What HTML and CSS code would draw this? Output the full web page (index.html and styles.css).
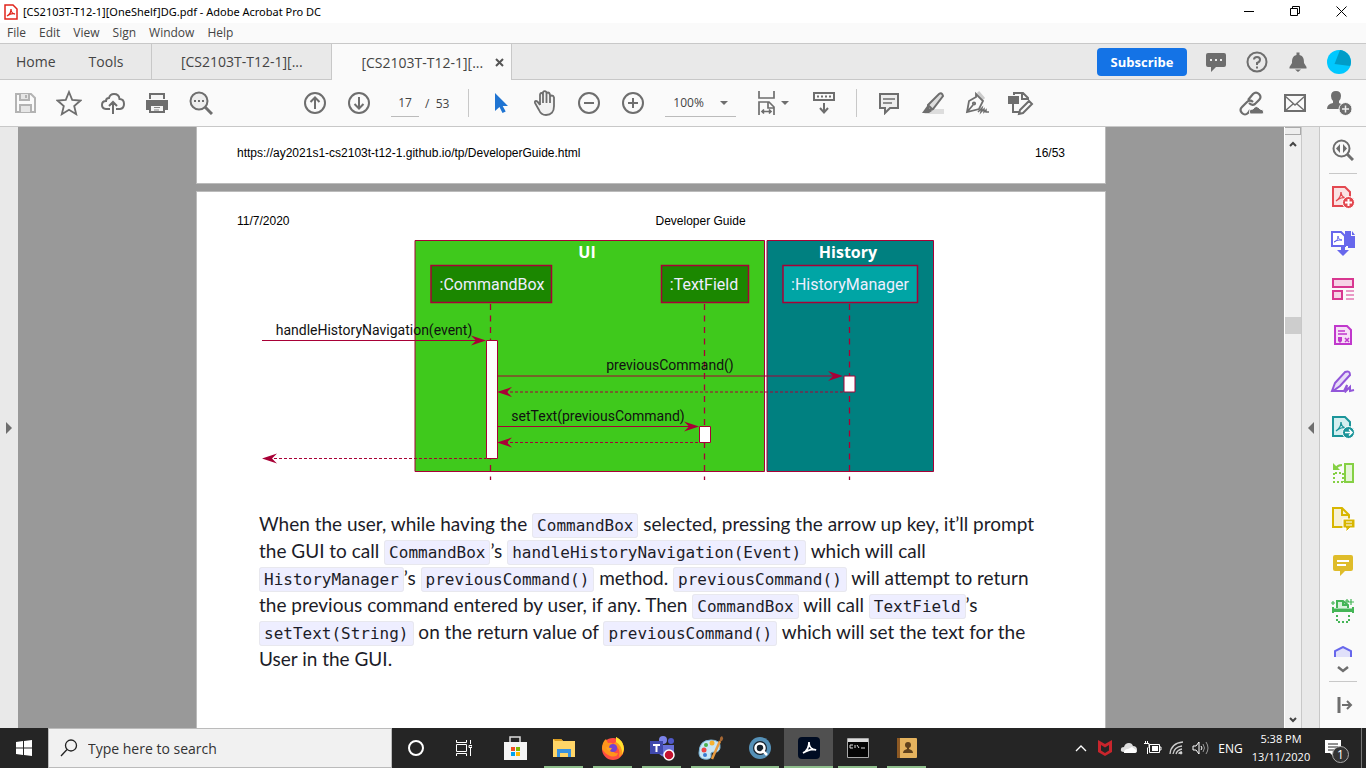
FILE: index.html
```html
<!DOCTYPE html>
<html lang="en">
<head>
<meta charset="utf-8">
<title>[CS2103T-T12-1][OneShelf]DG.pdf - Adobe Acrobat Pro DC</title>
<link rel="stylesheet" href="styles.css">
</head>
<body>
<header class="titlebar">
  <svg class="app-icon" width="14" height="16" viewBox="0 0 14 16"><path d="M2 1h7l4 4v10H1V1z" fill="#fff" stroke="#e1251b" stroke-width="1.5"/><path d="M3 12c2-1 4-4 4-7 0 3 2 5 4 5-3-1-5 0-8 2z" fill="none" stroke="#e1251b" stroke-width="1.3"/></svg>
  <span class="window-title">[CS2103T-T12-1][OneShelf]DG.pdf - Adobe Acrobat Pro DC</span>
  <div class="window-controls">
    <button aria-label="Minimize"><svg width="11" height="11"><path d="M0 5.5h10" stroke="#000"/></svg></button>
    <button aria-label="Restore"><svg width="11" height="11" fill="none" stroke="#000"><path d="M.5 2.500h7v7h-7zM2.500 2.500v-2h7v7h-2"/></svg></button>
    <button aria-label="Close"><svg width="11" height="11"><path d="M.5.500l10 10M10.500.500l-10 10" stroke="#000"/></svg></button>
  </div>
</header>
<nav class="menubar" aria-label="Menu">
  <button>File</button><button>Edit</button><button>View</button><button>Sign</button><button>Window</button><button>Help</button>
</nav>
<div class="tabbar">
  <button class="nav-tab">Home</button><button class="nav-tab tools">Tools</button>
  <button class="doc-tab">[CS2103T-T12-1][...</button>
  <div class="doc-tab active"><button>[CS2103T-T12-1][...</button><button class="close-tab" aria-label="Close tab"><svg width="9" height="9"><path d="M1 1l7 7M8 1L1 8" stroke="#555" stroke-width="2"/></svg></button></div>
  <div class="account">
    <button class="subscribe">Subscribe</button>
    <button class="round" aria-label="Notes"><svg width="22" height="22" viewBox="0 0 22 22"><path d="M3 2h16q2 0 2 2v10q0 2-2 2h-8l-5 5v-5H3q-2 0-2-2V4q0-2 2-2z" fill="#6e6e6e"/><path d="M5 8h2v2H5zm5 0h2v2h-2zm5 0h2v2h-2z" fill="#eee"/></svg></button>
    <button class="round" aria-label="Help"><svg width="22" height="22" viewBox="0 0 22 22" fill="none" stroke="#6e6e6e" stroke-width="2"><circle cx="11" cy="11" r="9.500"/><path d="M8 8.500Q8 6 11 6t3 2.500-3 3.500v2m0 1.500v2"/></svg></button>
    <button class="round" aria-label="Notifications"><svg width="18" height="22" viewBox="0 0 18 22" fill="#6e6e6e"><path d="M7.500 4V1.500h3V4c4 1 4.500 4 4.500 8l2.500 4v1.500H.5V16L3 12c0-4 .5-7 4.500-8zM6 18.500h6l-3 2.500z"/></svg></button>
    <button class="round" aria-label="Profile"><svg width="24" height="24" viewBox="0 0 24 24"><circle cx="12" cy="12" r="12" fill="#00c8ff"/><path d="M13 .1A12 12 0 0 1 23.200 16L7.500 14z" fill="#009cc8"/></svg></button>
  </div>
</div>
<div class="toolbar">
  <div class="group files">
    <button aria-label="Save"><svg width="24" height="24" viewBox="0 0 24 24" fill="none" stroke="#b3b3b3" stroke-width="2"><path d="M3 3h15l4 4v14H3z"/><path d="M7 3v6h9V3M7 21v-7h11v7" fill="#e6e6e6"/><path d="M13 4v3"/></svg></button>
    <button aria-label="Star"><svg width="26" height="26" viewBox="0 0 26 26"><path d="M13 2l3.200 7.800 8.300.7-6.300 5.500 2 8.200-7.200-4.400-7.200 4.400 2-8.200L1.500 10.500l8.300-.7z" fill="none" stroke="#6e6e6e" stroke-width="1.800"/></svg></button>
    <button aria-label="Upload"><svg width="24" height="24" viewBox="0 0 24 24" fill="none" stroke="#6e6e6e" stroke-width="2"><path d="M9 18H5q-4-.5-4-4 0-4 4-4 0-3 3-3 1-4 5-4 5 0 5.500 5 4.500 0 4.500 5 0 4.500-4 5h-4M12 23V11m-4 4l4-4 4 4"/></svg></button>
    <button aria-label="Print"><svg width="24" height="24" viewBox="0 0 24 24"><path d="M4 2h16v6H4zM1 9h22v10h-3v3H4v-3H1z" fill="#6e6e6e"/><path d="M6 4h12v4H6zM6 15h12v5H6z" fill="#f5f5f5"/><path d="M9 16.500h6m-6 2.500h5" stroke="#888"/></svg></button>
    <button aria-label="Find"><svg width="24" height="24" viewBox="0 0 24 24" fill="none" stroke="#6e6e6e" stroke-width="2"><circle cx="10" cy="10" r="8.500" fill="#eee"/><path d="M16 16l7 7" stroke-width="3"/><path d="M5 10h2m2 0h2m2 0h2"/></svg></button>
  </div>
  <div class="group paging">
    <button aria-label="Previous page"><svg width="22" height="22" viewBox="0 0 22 22" fill="none" stroke="#6e6e6e" stroke-width="2"><circle cx="11" cy="11" r="10"/><path d="M11 17V6M6.500 10L11 5.500l4.500 4.500"/></svg></button>
    <button aria-label="Next page"><svg width="22" height="22" viewBox="0 0 22 22" fill="none" stroke="#6e6e6e" stroke-width="2"><circle cx="11" cy="11" r="10"/><path d="M11 5v11m-4.500-4l4.500 4.500 4.500-4.500"/></svg></button>
  </div>
  <input class="page-number" aria-label="Page number" value="17"><span class="page-total">/&nbsp; 53</span>
  <span class="separator"></span>
  <div class="group">
    <button aria-label="Select"><svg width="24" height="24" viewBox="0 0 24 24"><path d="M6 2v18l4.500-4 3 6 3.200-1.500-3-5.500H19z" fill="#1f74d2"/></svg></button>
    <button aria-label="Hand"><svg width="24" height="26" viewBox="0 0 24 26" fill="#f2f2f2" stroke="#6e6e6e" stroke-width="1.800"><path d="M7 15V5q0-2 1.500-2T10 5v-2q0-1.800 1.700-1.800T13.500 3v1q0-1.500 1.500-1.500T17 5v2q0-1.500 1.800-1.500T21 7.500V16q0 9-8 9-5 0-7-5l-4-7q-.5-2 1-2t4 4M10 4v9m3.500-9v9M17 6v7"/></svg></button>
    <button aria-label="Zoom out"><svg width="22" height="22" viewBox="0 0 22 22" fill="none" stroke="#6e6e6e" stroke-width="2"><circle cx="11" cy="11" r="10"/><path d="M6 11h10"/></svg></button>
    <button aria-label="Zoom in"><svg width="22" height="22" viewBox="0 0 22 22" fill="none" stroke="#6e6e6e" stroke-width="2"><circle cx="11" cy="11" r="10"/><path d="M6 11h10M11 6v10"/></svg></button>
  </div>
  <div class="zoom-box"><select aria-label="Zoom"><option>100%</option></select><svg width="8" height="4"><path d="M0 0h8L4 4z" fill="#6e6e6e"/></svg></div>
  <div class="group view-tools">
    <button class="fit" aria-label="Fit width"><svg width="32" height="26" viewBox="0 0 32 26" fill="none" stroke="#6e6e6e" stroke-width="2"><path d="M2 1v7h15V1M2 25V12h10l5 5v8M11 12v6h6M5 21.500h9M7 19.500l-2 2 2 2m5-4l2 2-2 2" stroke-width="1.700"/><path d="M24 11h8l-4 4z" fill="#6e6e6e" stroke="none"/></svg></button>
    <button aria-label="Keyboard"><svg width="24" height="24" viewBox="0 0 24 24" fill="none" stroke="#6e6e6e" stroke-width="2"><path d="M2 2h20v7H2zM12 12v9m-4-4l4 4.500 4-4.500"/><path d="M5 5.500h14" stroke-dasharray="2 2"/></svg></button>
  </div>
  <span class="separator"></span>
  <div class="group">
    <button aria-label="Comment"><svg width="22" height="24" viewBox="0 0 22 24" fill="#eee" stroke="#6e6e6e" stroke-width="2"><path d="M2 3h18v14h-8l-5 5v-5H2z"/><path d="M5 8h12m-12 4h9" stroke-width="1.300"/></svg></button>
    <button aria-label="Highlight"><svg width="24" height="24" viewBox="0 0 24 24"><path d="M8 18h15v5H3z" fill="#ddd"/><path d="M7 14L18 3q3-2 4 2L12 18l-5 1zM7 14l5 5" fill="#ddd" stroke="#6e6e6e" stroke-width="2"/><path d="M6 15l5 5-3 2H1z" fill="#6e6e6e"/></svg></button>
    <button aria-label="Sign"><svg width="26" height="24" viewBox="0 0 26 24" fill="none" stroke="#6e6e6e" stroke-width="1.800"><path d="M14 1l6 7" stroke="#ccc" stroke-width="3"/><path d="M12 3l7 7-4 8-12 3 2-11 7-4zM3 21l6-7"/><circle cx="10" cy="12.500" r="1.200"/><path d="M14 21l4-4-1 4 3-3v3l2-2v2h3" stroke-width="1.500"/></svg></button>
    <button aria-label="More tools"><svg width="26" height="26" viewBox="0 0 26 26" fill="none" stroke="#6e6e6e" stroke-width="2"><path d="M6 5V3h9l5 5v2M14 3v6h6M5 14v8h6M12 20l9-9 3 3-9 9-4 1z"/><path d="M1 7h9v6H1z" fill="#6e6e6e"/></svg></button>
  </div>
  <div class="group share">
    <button aria-label="Share link"><svg width="26" height="26" viewBox="0 0 26 26" fill="none" stroke="#6e6e6e" stroke-width="2.200"><path d="M10 10l5-6q3-3 6 0t0 6l-4 4q-3 2-6-1M15 12q-3-3-6 0l-5 5q-3 3 0 6t6 0l2-3"/><path d="M12 24q-2-5 3-5 3-5 7 0 5 1 3 5z" fill="#6e6e6e" stroke="#fafafa" stroke-width="1"/></svg></button>
    <button aria-label="Email"><svg width="24" height="20" viewBox="0 0 24 20" fill="none" stroke="#6e6e6e"><path d="M2 2h20v16H2z" stroke-width="2"/><path d="M2 3l10 9L22 3M2 18l8-7m12 7l-8-7" stroke-width="1.400"/></svg></button>
    <button aria-label="Add people"><svg width="26" height="26" viewBox="0 0 26 26" fill="#6e6e6e"><path d="M5 6q0-5 5-5t5 5q0 3-2 5v2l4 2v4H1q0-5 6-6v-2Q5 9 5 6z"/><circle cx="19.500" cy="19" r="6.500" stroke="#fafafa"/><path d="M16 19h7m-3.500-3.500v7" stroke="#eee" stroke-width="1.500"/></svg></button>
  </div>
</div>
<main class="workspace">
  <button class="left-rail" aria-label="Show navigation"><svg width="6" height="12"><path d="M0 0l6 6-6 6z" fill="#6e6e6e"/></svg></button>
  <section class="canvas">
    <article class="page page-end"><a href="#dg">https://ay2021s1-cs2103t-t12-1.github.io/tp/DeveloperGuide.html</a><span>16/53</span></article>
    <article class="page page-main" id="dg">
      <div class="page-head"><span>11/7/2020</span><span class="page-title">Developer Guide</span></div>
      <svg class="diagram" width="686" height="256" viewBox="259 236 686 256" role="img" aria-label="History sequence diagram">
        <g stroke="#a80036"><path d="M415 240.500h349.500v231H415z" fill="#3fc91c"/><path d="M767 240.500h166.500v231H767z" fill="#008080"/></g>
        <g stroke="#a80036" stroke-width="1.300" stroke-dasharray="6 5.500"><path d="M490.500 304v176M704.500 304v176M849.500 304v176"/></g>
        <g stroke="#a80036" stroke-width="1.500"><path d="M431 265.500h120.500v37H431zM661.500 265.500h87v37h-87z" fill="#1b8700"/><path d="M783 265.500h134.500v37H783z" fill="#00a5a5"/></g>
        <g stroke="#a80036" fill="#fff"><path d="M486.500 340.500h11v118h-11zM699.500 426.500h11v16h-11zM844 376h11v16h-11z"/></g>
        <g stroke="#a80036" fill="none"><path d="M262 340.500h220M498 376h340M498 426.500h196"/><path d="M500 392h344M500 442.500h199M264 458.500h222" stroke-dasharray="3 2"/></g>
        <g fill="#a80036"><path d="M486 340.500l-15-5 5 5-5 5zM843 376l-15-5 5 5-5 5zM699 426.500l-15-5 5 5-5 5zM497 392l15-5-5 5 5 5zM497 442.500l15-5-5 5 5 5zM262 458.500l15-5-5 5 5 5z"/></g>
        <g class="label-heading"><text x="587" y="258" text-anchor="middle">UI</text><text x="848" y="258" text-anchor="middle">History</text></g>
        <g class="label-actor"><text x="492" y="290" text-anchor="middle">:CommandBox</text><text x="704" y="290" text-anchor="middle">:TextField</text><text x="850" y="290" text-anchor="middle">:HistoryManager</text></g>
        <g class="label-message"><text x="374" y="335" text-anchor="middle">handleHistoryNavigation(event)</text><text x="670" y="370" text-anchor="middle">previousCommand()</text><text x="598" y="421" text-anchor="middle">setText(previousCommand)</text></g>
      </svg>
      <p class="description">When the user, while having the <code>CommandBox</code> selected, pressing the arrow up key, it’ll prompt<br>the GUI to call <code>CommandBox</code>’s <code>handleHistoryNavigation(Event)</code> which will call<br><code>HistoryManager</code>’s <code>previousCommand()</code> method. <code>previousCommand()</code> will attempt to return<br>the previous command entered by user, if any. Then <code>CommandBox</code> will call <code>TextField</code>’s<br><code>setText(String)</code> on the return value of <code>previousCommand()</code> which will set the text for the<br>User in the GUI.</p>
    </article>
  </section>
  <div class="scrollbar">
    <span class="split-handle"></span>
    <button aria-label="Scroll up"><svg width="8" height="6"><path d="M1 5l3-3 3 3" fill="none" stroke="#444" stroke-width="2"/></svg></button>
    <span class="track-above"></span><span class="thumb"></span><span class="track-below"></span>
    <button aria-label="Scroll down"><svg width="8" height="6"><path d="M1 1l3 3 3-3" fill="none" stroke="#444" stroke-width="2"/></svg></button>
  </div>
  <button class="right-rail" aria-label="Toggle tools pane"><svg width="6" height="12"><path d="M6 0v12L0 6z" fill="#6e6e6e"/></svg></button>
  <aside class="tools-pane">
    <button class="search-tools" aria-label="Search tools"><svg width="22" height="22" viewBox="0 0 22 22" fill="none" stroke="#6e6e6e" stroke-width="2"><circle cx="9.500" cy="9.500" r="8"/><path d="M15 15l6 6" stroke-width="3"/><path d="M8 5v9L4 9.500zM11 5v9l4-4.500z" fill="#6e6e6e" stroke="none"/></svg></button>
    <div class="tool-list">
      <button aria-label="Create PDF"><svg width="24" height="24" viewBox="0 0 24 24"><path d="M2 2h12l5 5v14H2z" fill="#fae2e3" stroke="#e34850" stroke-width="2"/><path d="M5 16c3-2 5-5 5-9 0 4 3 6 6 6-5-1-7 0-11 3z" fill="none" stroke="#e34850" stroke-width="1.300"/><circle cx="17.500" cy="17.500" r="6" fill="#e34850" stroke="#fff"/><path d="M14 17.500h7m-3.500-3.500v7" stroke="#fff" stroke-width="2"/></svg></button>
      <button aria-label="Combine files"><svg width="26" height="26" viewBox="0 0 26 26"><path d="M2 2h9l4 4v10H2z" fill="#fff" stroke="#6767ec" stroke-width="2"/><path d="M4 12c3-1 4-3 4-6 0 3 2 4 4 4-3 0-5 0-8 2z" fill="none" stroke="#6767ec"/><path d="M15 1h6v5h4v12h-7v-2h-3zM22 1l3 4h-3zM11 15h4v5h4l-6 6-6-6h4z" fill="#6767ec"/></svg></button>
      <button aria-label="Organize pages"><svg width="22" height="22" viewBox="0 0 22 22" fill="#f6d3e6" stroke="#d83790" stroke-width="2"><path d="M1 1h20v8H1zM1 13h9v8H1z"/><path d="M14 13h8m-8 4h8m-8 4h8" stroke-width="1.200"/></svg></button>
      <button aria-label="Prepare form"><svg width="20" height="22" viewBox="0 0 20 22"><path d="M2 2h12l4 4v14H2z" fill="#f7dff7" stroke="#c038cc" stroke-width="2"/><path d="M5 7h7m-7 3h9M12 14l4 4m0-4l-4 4" stroke="#c038cc" stroke-width="1.500"/><path d="M5 13h4v4l-2 2-2-2z" fill="#c038cc"/></svg></button>
      <button aria-label="Fill and sign"><svg width="26" height="24" viewBox="0 0 26 24" fill="#e7dcf8" stroke="#9256d9" stroke-width="2"><path d="M5 14L15 3q5-2 5 3L10 17l-7 5H2z"/><path d="M2 22h12l3-6-1 6 4-4v4l4-1" fill="none"/></svg></button>
      <button aria-label="Export PDF"><svg width="24" height="24" viewBox="0 0 24 24"><path d="M2 2h12l5 5v14H2z" fill="#d4eff0" stroke="#1b959a" stroke-width="2"/><path d="M5 16c3-2 5-5 5-9 0 4 3 6 6 6-5-1-7 0-11 3z" fill="none" stroke="#1b959a" stroke-width="1.300"/><circle cx="17.500" cy="17.500" r="6" fill="#1b959a" stroke="#fff"/><path d="M14 17.500h7m-3-3l3 3-3 3" fill="none" stroke="#fff" stroke-width="1.500"/></svg></button>
      <button aria-label="Crop pages"><svg width="22" height="22" viewBox="0 0 22 22" fill="none" stroke="#85d044" stroke-width="2"><path d="M13 2h8v18h-8z" fill="#e5f6d7"/><path d="M2 11v9h9M3 11h8v9" stroke-dasharray="2 2"/><path d="M10 3q-4 0-6 3" /><path d="M1 1v7h7z" fill="#85d044" stroke="none"/></svg></button>
      <button aria-label="Page comments"><svg width="24" height="26" viewBox="0 0 24 26"><path d="M2 2h9l7 7v12H2z" fill="#f7f1d5" stroke="#d8b600" stroke-width="2"/><path d="M11 2v7h7" fill="none" stroke="#d8b600" stroke-width="2"/><path d="M12 13h12v9h-5l-4 4v-4h-3z" fill="#d8b600" stroke="#fff"/><path d="M15 16h6m-6 3h6" stroke="#fff"/></svg></button>
      <button aria-label="Comment tool"><svg width="22" height="24" viewBox="0 0 22 24"><path d="M3 2h16q2 0 2 2v12q0 2-2 2h-6l-5 5v-5H3q-2 0-2-2V4q0-2 2-2z" fill="#dfbc2a"/><path d="M5 8h12M5 12h9" stroke="#fff" stroke-width="2"/></svg></button>
      <button aria-label="Scan and OCR"><svg width="24" height="26" viewBox="0 0 24 26" fill="none" stroke="#44b556" stroke-width="2"><path d="M6 10V3h6l5 4v3" fill="#d8f2dc"/><path d="M12 3v4h5M2 9v6m20-6v6M1 13h22" stroke-width="2"/><path d="M1 12h22" stroke-width="3"/><path d="M6 17v7h12v-7" stroke-dasharray="2 2"/><path d="M0 5h4M2 3v4m14-6v4m-2-2h4m2-2v6m-3-3h6" stroke-width="1.200"/></svg></button>
      <button class="clipped" aria-label="Protect"><svg width="18" height="12" viewBox="0 0 18 12"><path d="M1 12V5l8-4 8 4v7" fill="#e0e0fa" stroke="#6767ec" stroke-width="2"/></svg></button>
    </div>
    <button class="more" aria-label="More"><svg width="12" height="7"><path d="M1 1l5 4 5-4" fill="none" stroke="#6e6e6e" stroke-width="2.500"/></svg></button>
    <button class="collapse" aria-label="Collapse pane"><svg width="16" height="16" viewBox="0 0 16 16" fill="none" stroke="#6e6e6e" stroke-width="2"><path d="M2 0v16" stroke-width="3"/><path d="M5 8h9m-4-4l4 4-4 4"/></svg></button>
  </aside>
</main>
<footer class="taskbar">
  <button class="start" aria-label="Start"><svg width="16" height="16" viewBox="0 0 16 16" fill="#fff"><path d="M0 2l7-1v6.500H0zM8 .900L16 0v7.500H8zM0 8.500h7V15l-7-1zM8 8.500h8V16l-8-.9z"/></svg></button>
  <label class="search"><svg width="18" height="18" viewBox="0 0 18 18" fill="none" stroke="#222" stroke-width="1.300"><circle cx="11" cy="6.500" r="5.500"/><path d="M7 10.500L1 17"/></svg><input aria-label="Search" placeholder="Type here to search"></label>
  <button class="system" aria-label="Cortana"><svg width="18" height="18"><circle cx="9" cy="9" r="7" fill="none" stroke="#fff" stroke-width="2"/></svg></button>
  <button class="system" aria-label="Task view"><svg width="16" height="16" viewBox="0 0 16 16" fill="none" stroke="#fff"><path d="M.5 0v2.500h10V0M.5 4.500h10v7H.5zM.5 16v-2.500h10V16M14.500 0v4m0 4v8M13 5.500h3v2h-3z"/></svg></button>
  <div class="apps">
    <button aria-label="Store"><svg width="24" height="26" viewBox="0 0 24 26"><path d="M7 7V2h10v5" fill="none" stroke="#ddd" stroke-width="1.500"/><path d="M1 7h23v18H1z" fill="#f5f5f5"/><path d="M8 12h4v4H8z" fill="#f25022"/><path d="M13 12h4v4h-4z" fill="#7fba00"/><path d="M8 17h4v4H8z" fill="#00a4ef"/><path d="M13 17h4v4h-4z" fill="#ffb900"/></svg></button>
    <button class="open" aria-label="Files"><svg width="22" height="20" viewBox="0 0 22 20"><path d="M0 1h8l2 2h12v16H0z" fill="#ffd567"/><path d="M0 1h8l2 2H2z" fill="#d99b20"/><path d="M4 11h14v8h-3v-4H7v4H4z" fill="#3992df"/></svg></button>
    <button class="open" aria-label="Firefox"><svg width="24" height="24" viewBox="0 0 24 24"><circle cx="12" cy="13" r="11" fill="#ff4d42"/><path d="M1 13q0-7 4-10l2 4q4-1 5 1l3-2V1q7 3 8 12-1 6-5 8 2-8-4-12l-5 1 3 3q0 5 5 4-1 5-8 3-5-2-8-7z" fill="#ff951c"/><path d="M15 1q7 3 8 12l-2 6q1-9-6-13z" fill="#ffe22e"/><circle cx="12" cy="12" r="4" fill="#7443cf"/><path d="M5 11q3 1 6 1l-2 3q-3 0-4-4z" fill="#ffa325"/></svg></button>
    <button class="open" aria-label="Teams"><svg width="26" height="26" viewBox="0 0 26 26"><circle cx="14" cy="5" r="4" fill="#7b83eb"/><circle cx="22" cy="6" r="3" fill="#5059c9"/><path d="M9 10h16v8q-2 4-7 4h-3q-6-2-6-7z" fill="#6870d8"/><path d="M1 6h13v13H1z" fill="#4049ad"/><path d="M4 10h7M7.500 10v7" stroke="#fff" stroke-width="2"/><circle cx="20" cy="20" r="5" fill="#c4122f" stroke="#fff" stroke-width="1.500"/></svg></button>
    <button class="open" aria-label="Paint"><svg width="26" height="26" viewBox="0 0 26 26"><path d="M1 18Q1 5 13 5q10 0 9 8-1 5-7 4-3 0-2 4 0 4-7 3-5-1-5-6z" fill="#c9e7f6" stroke="#7ab5d9"/><circle cx="6" cy="15" r="2.500" fill="#e44"/><circle cx="8" cy="10" r="2" fill="#49b04c"/><circle cx="14" cy="8" r="2.500" fill="#f6b231"/><circle cx="7" cy="20" r="2" fill="#397ad0"/><path d="M22 6l-8 18" stroke="#e79b41" stroke-width="2.500"/><path d="M22 7q-1-5 2-6 3 4-2 6z" fill="#a66733"/></svg></button>
    <button class="open" aria-label="Search app"><svg width="24" height="24" viewBox="0 0 24 24"><circle cx="12" cy="12" r="11" fill="#5591b8"/><circle cx="12" cy="12" r="7" fill="#16212c"/><circle cx="12" cy="12" r="4.500" fill="none" stroke="#fff" stroke-width="2.500"/><path d="M14 14l5 5" stroke="#fff" stroke-width="2.500"/></svg></button>
    <button class="open current" aria-label="Acrobat"><svg width="22" height="22" viewBox="0 0 22 22"><rect width="22" height="22" rx="4" fill="#000c22"/><path d="M5 16c4-2 6-6 6-11 0 5 3 8 7 8-4-2-8 0-13 3z" fill="none" stroke="#fff" stroke-width="1.700"/></svg></button>
    <button class="open" aria-label="Command Prompt"><svg width="22" height="20" viewBox="0 0 22 20"><path d="M.5.500h21v19H.5z" fill="#050505" stroke="#aaa"/><path d="M1 1h20v3H1z" fill="#ddd"/><path d="M3 7h3m-3 0v3h3m2-3v3m2-3l2 3m2 0h4" stroke="#ddd" fill="none"/></svg></button>
    <button class="open" aria-label="Contacts"><svg width="22" height="20" viewBox="0 0 22 20"><rect x="1" width="20" height="20" rx="1" fill="#e5b35e"/><path d="M1 0h3v20H1z" fill="#8d5923"/><circle cx="12" cy="7" r="3" fill="#60421c"/><path d="M11 9h2v2q4 1 4 4H7q0-3 4-4z" fill="#60421c"/></svg></button>
  </div>
  <div class="tray">
    <button aria-label="Show hidden icons"><svg width="12" height="8"><path d="M1 7l5-5 5 5" fill="none" stroke="#fff" stroke-width="1.300"/></svg></button>
    <button aria-label="Antivirus"><svg width="14" height="16" viewBox="0 0 14 16"><path d="M0 0l7 4 7-4v12l-7 4-7-4zM3 5v5.500L7 13l4-2.500V5L7 7.500z" fill="#c9252c" fill-rule="evenodd"/></svg></button>
    <button aria-label="OneDrive"><svg width="18" height="12" viewBox="0 0 18 12"><path d="M4 10Q0 10 1 7q0-2 3-2 1-4 5-4 3 0 4 3 4 0 4 4 0 3-3 3H4z" fill="#ddd"/><path d="M4 11q0-4 4-4l4-2 4 3q2 3-2 3z" fill="#fff"/></svg></button>
    <button aria-label="Battery"><svg width="18" height="14" viewBox="0 0 18 14" fill="none" stroke="#fff"><path d="M5.500 3.500h10v8h-10zM16 6h1v3h-1M0 2.500h5v3L3.500 7v6M1.500 0v2m2-2v2"/><path d="M8 5h6v5H8z" fill="#fff" stroke="none"/></svg></button>
    <button aria-label="Wi-Fi"><svg width="16" height="14" viewBox="0 0 16 14" fill="none" stroke="#ccc"><path d="M1 13Q2 2 14 1M4 13q1-7 9-8M7 13q1-4 6-5M10 13q0-2 3-2" stroke-width="1.300"/><circle cx="12" cy="12" r="1" fill="#fff"/></svg></button>
    <button aria-label="Volume"><svg width="18" height="14" viewBox="0 0 18 14" fill="none" stroke="#fff"><path d="M1 5h3l3-4v12L4 9H1zM9 5q2 2 0 4"/><path d="M11 3q3 4 0 8M14 1q4 6 0 12" stroke="#999"/></svg></button>
    <button class="language">ENG</button>
    <button class="clock"><span>5:38 PM</span><span>13/11/2020</span></button>
    <button class="action-center" aria-label="Notifications, 1 new"><svg width="17" height="17" viewBox="0 0 17 17"><path d="M0 0h16v13H9v4l-4-4H0z" fill="#fff"/><path d="M3 4h10M3 7h10M3 10h6" stroke="#222"/></svg><span class="badge">1</span></button>
  </div>
</footer>
</body>
</html>
```
FILE: styles.css
```css
* { box-sizing: border-box; }
body { margin: 0; height: 100vh; display: flex; flex-direction: column; overflow: hidden; background: #fafafa; color: #444; font-family: "Open Sans", "Noto Sans", sans-serif; font-size: 12px; }
button, input, select { font: inherit; color: inherit; border: 0; background: none; padding: 0; margin: 0; border-radius: 0; outline: 0; }
button { display: flex; align-items: center; justify-content: center; white-space: nowrap; }
svg { display: block; flex: none; }

.titlebar { height: 23px; flex: none; display: flex; align-items: center; background: #fff; color: #000; padding: 0 2px 0 4px; gap: 5px; }
.window-title { font-family: "Noto Sans", sans-serif; font-size: 11px; }
.window-controls { display: flex; margin-left: auto; }
.window-controls button { width: 46px; height: 20px; }
.menubar { height: 20px; flex: none; display: flex; align-items: center; gap: 13px; padding: 0 0 2px 7px; }

.tabbar { height: 37px; flex: none; display: flex; background: #e9e9e9; border-top: 1px solid #c8c8c8; border-bottom: 1px solid #c8c8c8; }
.nav-tab { font-size: 14px; padding-left: 16px; }
.nav-tab.tools { padding: 0 28px 0 33px; }
.doc-tab { width: 180px; font-size: 14px; border-left: 1px solid #c8c8c8; display: flex; align-items: center; justify-content: center; }
.doc-tab.active { width: 181px; background: #fafafa; margin-bottom: -1px; border-right: 1px solid #c8c8c8; padding-left: 22px; gap: 12px; }
.account { display: flex; align-items: center; margin-left: auto; padding-right: 7px; }
.subscribe { width: 90px; height: 28px; border-radius: 4px; background: #1473e6; color: #fff; font-weight: 700; font-size: 13px; margin-right: 8px; }
.round { width: 41px; }

.toolbar { height: 47px; flex: none; display: flex; align-items: center; border-bottom: 1px solid #c8c8c8; padding: 0 5px 0 3px; }
.group { display: flex; }
.group button { width: 44px; height: 40px; }
.paging { margin-left: 70px; }
.page-number { width: 28px; height: 28px; margin-left: 10px; border-bottom: 1px solid #bbb; text-align: center; }
.page-total { margin: 0 19px 0 6px; }
.separator { width: 1px; height: 28px; background: #c8c8c8; margin-right: 10px; }
.zoom-box { display: flex; align-items: center; width: 71px; height: 28px; border-bottom: 1px solid #bbb; margin: 0 9px 0 10px; padding: 0 8px; }
.zoom-box select { appearance: none; flex: 1; min-width: 0; }
.view-tools { gap: 13px; margin-right: 10px; }
.view-tools .fit { padding-left: 12px; }
.share { margin-left: auto; }

.workspace { flex: 1; min-height: 0; display: flex; }
.left-rail { width: 18px; background: #e9e9e9; }
.canvas { flex: 1; min-width: 0; background: #999; overflow: hidden; display: flex; flex-direction: column; align-items: center; gap: 7px; }
.page { width: 100%; max-width: 910px; background: #fff; border: 1px solid #bbb; color: #000; font-family: "Liberation Sans", Arial, sans-serif; }
.page-end { flex: none; height: 57px; border-top: 0; padding: 19px 40px 0; display: flex; justify-content: space-between; }
.page-end a { color: inherit; text-decoration: none; }
.page-main { flex: 1 0 auto; padding: 22px 40px 0; margin-bottom: -1px; }
.page-head { display: flex; height: 22px; }
.page-title { margin-left: 366px; }
.diagram { margin-left: 22px; }
.label-heading { font: 700 16px "Open Sans", sans-serif; fill: #fff; }
.label-actor { font: 16px Roboto, sans-serif; fill: #eef; }
.label-message { font: 14px Roboto, sans-serif; fill: #111; }
.description { margin: 18px 0 0 22px; font: 19px/27px Lato, "Open Sans", sans-serif; color: #1c1c28; white-space: nowrap; }
code { font: 16px "DejaVu Sans Mono", monospace; background: #eef; border: 1px solid #e8e8ee; border-radius: 3px; padding: 2px 4px; }

.scrollbar { width: 17px; background: #f0f0f0; display: flex; flex-direction: column; border-left: 1px solid #fff; }
.scrollbar button { height: 17px; }
.split-handle { height: 8px; background: #eee; border: 1px solid #aaa; border-left: 0; }
.track-above { flex: 165; }
.thumb { height: 17px; background: #cdcdcd; }
.track-below { flex: 378; }
.right-rail { width: 19px; background: #e9e9e9; border: 1px solid #c8c8c8; border-width: 0 1px; }
.tools-pane { width: 46px; display: flex; flex-direction: column; align-items: center; }
.search-tools { width: 28px; height: 47px; flex: none; border-bottom: 1px solid #c8c8c8; }
.tool-list { flex: 1; min-height: 0; overflow: hidden; }
.tool-list button { width: 46px; height: 46px; }
.tool-list .clipped { align-items: flex-start; padding-top: 12px; }
.more { height: 25px; flex: none; width: 28px; border-bottom: 1px solid #c8c8c8; }
.collapse { height: 46px; flex: none; padding-left: 4px; }

.taskbar { height: 40px; flex: none; display: flex; background: #252525; color: #fff; }
.start, .system { width: 48px; flex: none; }
.search { width: 344px; display: flex; align-items: center; background: #f1f1f1; border: 1px solid #bbb; padding-left: 11px; gap: 10px; }
.search input { flex: 1; min-width: 0; font-size: 14px; }
.search input::placeholder { color: #333; opacity: 1; }
.apps { display: flex; margin-left: 2px; }
.apps button { width: 49px; position: relative; }
.apps .open::after { content: ""; position: absolute; left: 5px; right: 5px; bottom: 0; height: 2px; background: #8fbf8c; }
.apps .current { background: #505050; }
.apps .current::after { left: 0; right: 0; }
.tray { display: flex; margin-left: auto; border-right: 1px solid #777; margin-right: 4px; }
.tray button { width: 24px; }
.tray .language { width: 35px; }
.tray .clock { width: 66px; flex-direction: column; font-size: 11px; line-height: 18px; }
.tray .action-center { width: 47px; position: relative; padding-right: 8px; }
.badge { position: absolute; left: 18px; top: 18px; width: 17px; height: 17px; line-height: 15px; border: 1px solid #aaa; border-radius: 50%; background: #333; }
```
